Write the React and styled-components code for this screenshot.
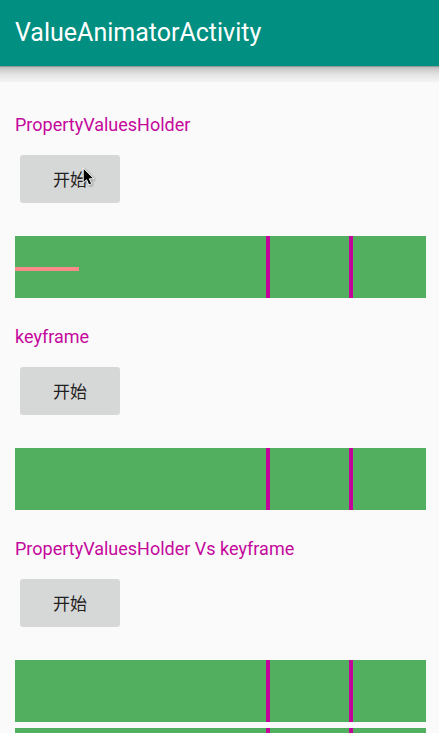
import React from "react";
import styled, { createGlobalStyle } from "styled-components";

const GlobalStyle = createGlobalStyle`
  * { box-sizing: border-box; }
  body {
    margin: 0;
    background: #fafafa;
    font-family: Roboto, "Noto Sans CJK SC", sans-serif;
  }
`;

const Screen = styled.div`
  display: flex;
  flex-direction: column;
  height: 100vh;
  overflow: hidden;
`;

const AppBar = styled.header`
  flex: none;
  display: flex;
  align-items: center;
  height: 66px;
  padding: 0 15px;
  background: #008f80;
`;

const Title = styled.h1`
  margin: 0;
  color: #fff;
  font-size: 25px;
  line-height: 32px;
  font-weight: 400;
`;

const BarShadow = styled.div`
  flex: none;
  height: 16px;
  background: linear-gradient(#8c9a98 0 1px, #bdbdbd 1px, #cfcfcf 4px, #e2e2e2 8px, #f0f0f0 14px, #f3f3f3);
`;

const Content = styled.main`
  flex: 1;
  min-height: 0;
  overflow-y: auto;
  scrollbar-width: none;
  padding: 31px 13px 16px 15px;
`;

const Section = styled.section`
  display: flex;
  flex-direction: column;
  align-items: stretch;
  margin-bottom: 27px;
`;

const Label = styled.h2`
  margin: 0 0 18px;
  color: #c4089c;
  font-size: 18px;
  line-height: 24px;
  font-weight: 400;
`;

const StartButton = styled.button`
  position: relative;
  align-self: flex-start;
  width: 100px;
  height: 48px;
  margin: 0 5px 33px;
  padding: 0;
  border: 0;
  border-radius: 3px;
  background: #d6d8d7;
  color: #1f2020;
  font-family: "Noto Sans CJK SC", sans-serif;
  font-size: 17px;
  line-height: 24px;
  font-weight: 400;
  cursor: pointer;
`;

const Pointer = styled.svg`
  position: absolute;
  left: 62px;
  top: 12px;
  width: 13px;
  height: 20px;
  overflow: visible;
  filter: drop-shadow(1px 1px 1px rgba(0, 0, 0, 0.35));
`;

const Tracks = styled.div`
  display: flex;
  flex-direction: column;
  gap: 6px;
`;

const Track = styled.div`
  position: relative;
  display: grid;
  grid-template-columns: 251fr 4px 79fr 4px 73fr;
  height: 62px;
  background: #52af60;
`;

const Marker = styled.span`
  grid-column: ${(p) => p.$column};
  grid-row: 1;
  background: #c4029b;
`;

const Progress = styled.span`
  position: absolute;
  left: 0;
  top: 31px;
  width: 64px;
  height: 4px;
  background: #f98b8b;
`;

function MousePointer() {
  return (
    <Pointer viewBox="0 0 13 20" aria-hidden="true">
      <path
        d="M1.2 1V16L4.6 12.8L6.8 18L9.7 16.8L7.4 11.8H12Z"
        fill="#000"
        stroke="#fff"
        strokeWidth="1"
      />
    </Pointer>
  );
}

function AnimationTrack({ running }) {
  return (
    <Track>
      <Marker $column={2} />
      <Marker $column={4} />
      {running && <Progress />}
    </Track>
  );
}

const demos = [
  { name: "PropertyValuesHolder", tracks: 1, running: true },
  { name: "keyframe", tracks: 1, running: false },
  { name: "PropertyValuesHolder Vs keyframe", tracks: 2, running: false },
];

export default function App() {
  return (
    <>
      <GlobalStyle />
      <Screen>
        <AppBar>
          <Title>ValueAnimatorActivity</Title>
        </AppBar>
        <BarShadow />
        <Content>
          {demos.map((demo) => (
            <Section key={demo.name}>
              <Label>{demo.name}</Label>
              <StartButton type="button">
                开始
                {demo.running && <MousePointer />}
              </StartButton>
              <Tracks>
                {Array.from({ length: demo.tracks }, (_, i) => (
                  <AnimationTrack key={i} running={demo.running} />
                ))}
              </Tracks>
            </Section>
          ))}
        </Content>
      </Screen>
    </>
  );
}
